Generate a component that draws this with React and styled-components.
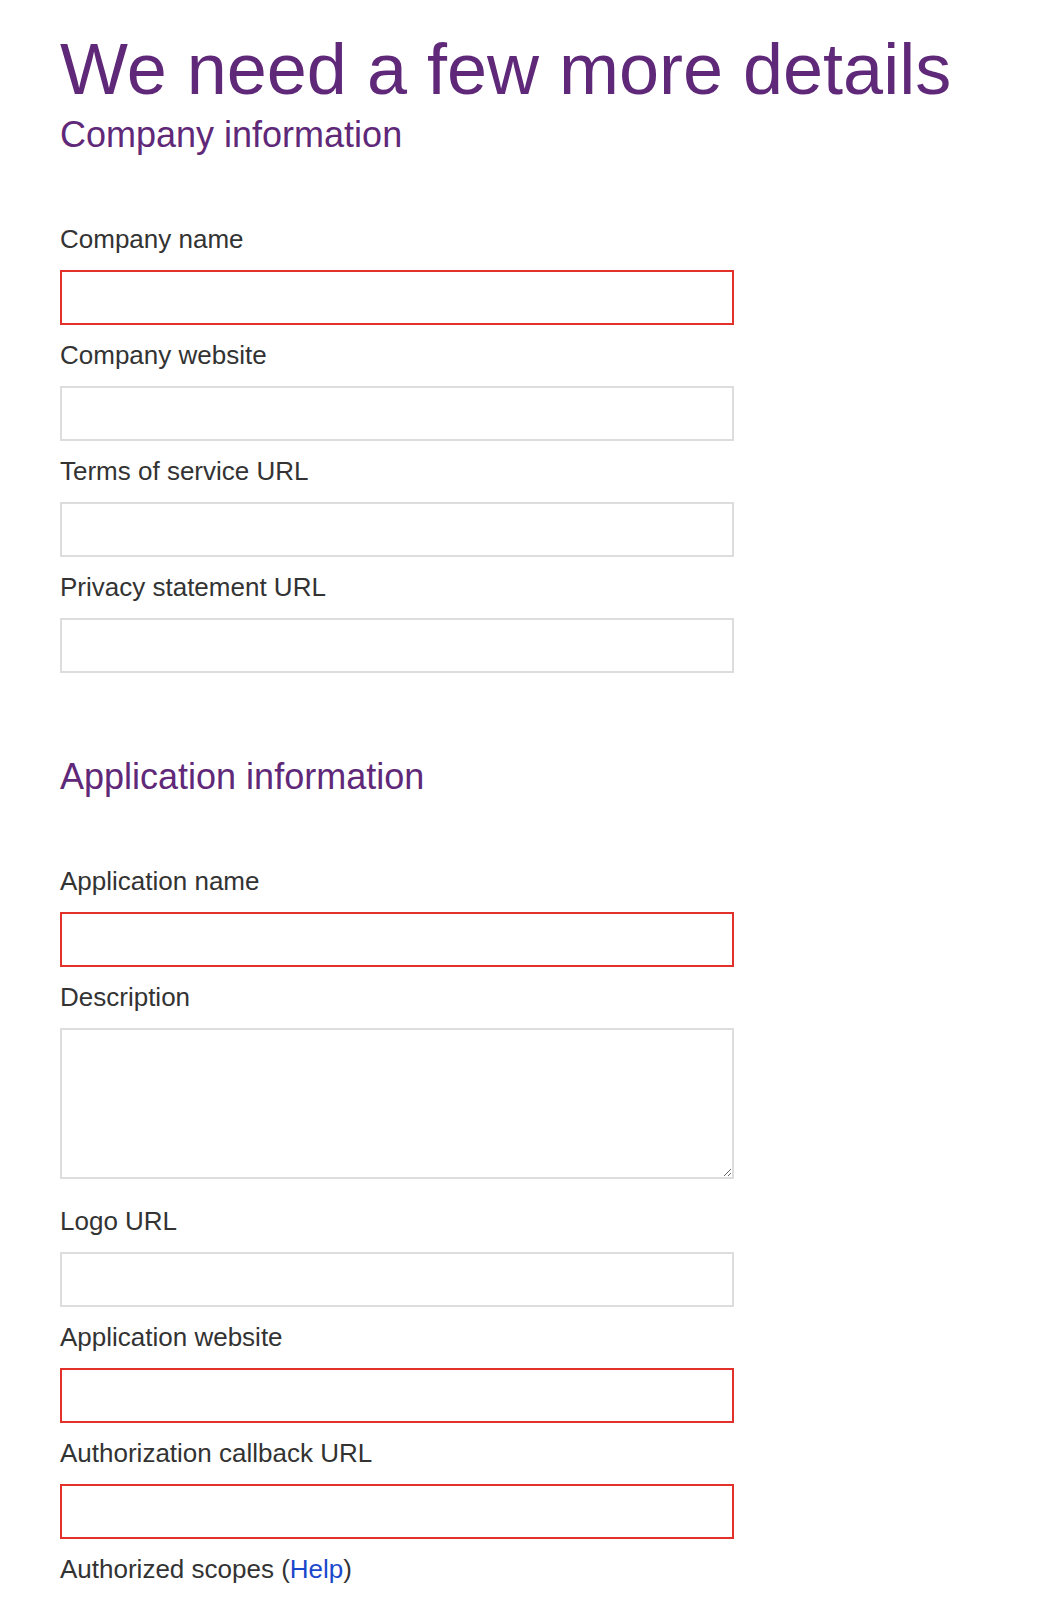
import styled, { createGlobalStyle } from 'styled-components';

const GlobalStyle = createGlobalStyle`
  html, body {
    margin: 0;
    padding: 0;
    background: #ffffff;
  }

  body {
    font-family: "Liberation Sans", Arial, Helvetica, sans-serif;
  }
`;

const Page = styled.div`
  padding: 29px 0 40px 60px;
  display: flex;
  flex-direction: column;
`;

const Title = styled.h1`
  margin: 0;
  font-size: 72px;
  line-height: 80px;
  font-weight: 400;
  color: #5f2878;
`;

const Section = styled.section`
  display: flex;
  flex-direction: column;
  margin-top: ${(p) => p.$top}px;
`;

const SectionTitle = styled.h2`
  margin: 0 0 69px;
  font-size: 36px;
  line-height: 40px;
  font-weight: 400;
  color: #5f2878;
`;

const Field = styled.div`
  display: flex;
  flex-direction: column;
  gap: 16px;
  margin-bottom: ${(p) => (p.$multi ? 27 : 15)}px;
`;

const Label = styled.label`
  font-size: 26px;
  line-height: 30px;
  color: #333333;
`;

const HelpLink = styled.a`
  color: #1a48cc;
  text-decoration: none;
`;

const Input = styled.input`
  box-sizing: border-box;
  width: 674px;
  height: 55px;
  margin: 0;
  padding: 0 12px;
  border: 2px solid ${(p) => (p.$invalid ? '#e2302a' : '#dddddd')};
  border-radius: 0;
  outline: none;
  font-family: inherit;
  font-size: 22px;
  background: #ffffff;
`;

const TextArea = styled.textarea`
  display: block;
  box-sizing: border-box;
  width: 674px;
  height: 151px;
  margin: 0;
  padding: 10px 12px;
  border: 2px solid #dddddd;
  border-radius: 0;
  outline: none;
  font-family: inherit;
  font-size: 22px;
  resize: vertical;
`;

const companyFields = [
  { label: 'Company name', invalid: true },
  { label: 'Company website' },
  { label: 'Terms of service URL' },
  { label: 'Privacy statement URL' },
];

const appFields = [
  { label: 'Application name', invalid: true },
  { label: 'Description', multi: true },
  { label: 'Logo URL' },
  { label: 'Application website', invalid: true },
  { label: 'Authorization callback URL', invalid: true },
];

function FormField({ label, invalid, multi }) {
  return (
    <Field $multi={multi}>
      <Label>{label}</Label>
      {multi ? <TextArea /> : <Input type='text' $invalid={invalid} />}
    </Field>
  );
}

function App() {
  return (
    <Page>
      <GlobalStyle />
      <Title>We need a few more details</Title>
      <Section $top={6}>
        <SectionTitle>Company information</SectionTitle>
        {companyFields.map((f) => (
          <FormField key={f.label} {...f} />
        ))}
      </Section>
      <Section $top={69}>
        <SectionTitle>Application information</SectionTitle>
        {appFields.map((f) => (
          <FormField key={f.label} {...f} />
        ))}
        <Label>
          Authorized scopes (<HelpLink href='#'>Help</HelpLink>)
        </Label>
      </Section>
    </Page>
  );
}

export default App;
